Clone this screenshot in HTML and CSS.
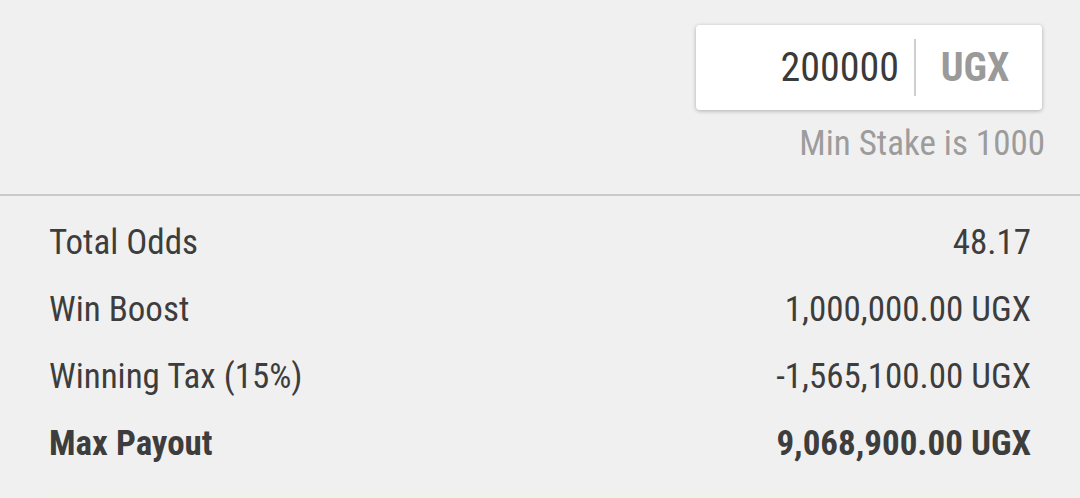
FILE: index.html
```html
<!DOCTYPE html>
<html lang="en">
<head>
    <meta charset="UTF-8">
    <meta name="viewport" content="width=device-width, initial-scale=1.0">
    <title>Betslip</title>
    <link rel="stylesheet" href="styles.css">
</head>
<body>
    <div class="stake">
        <div class="stake-box">
            <input type="text" id="amount" class="stake-input" value="200000">
            <span class="stake-currency">UGX</span>
        </div>
        <div class="stake-hint">Min Stake is 1000</div>
    </div>

    <div class="summary">
        <div class="row">
            <span>Total Odds</span>
            <span>48.17</span>
        </div>
        <div class="row">
            <span>Win Boost</span>
            <span>1,000,000.00 UGX</span>
        </div>
        <div class="row">
            <span>Winning Tax (15%)</span>
            <span>-1,565,100.00 UGX</span>
        </div>
        <div class="row row-total">
            <span>Max Payout</span>
            <span>9,068,900.00 UGX</span>
        </div>
    </div>
    <div class="next-card"></div>
</body>
</html>
```

FILE: styles.css
```css
body {
    margin: 0;
    background-color: #f0f0f0;
    color: #3d3d3d;
    font-family: "Roboto Condensed", Roboto, "Liberation Sans", sans-serif;
}
.stake {
    padding: 25px 35px 30px 0;
    border-bottom: 2px solid #c9c9c9;
    display: flex;
    flex-direction: column;
    align-items: flex-end;
}
.stake-box {
    display: flex;
    align-items: center;
    width: 346px;
    height: 85px;
    margin-right: 3px;
    background-color: #fff;
    border-radius: 4px;
    box-shadow: 0 1px 4px rgba(0, 0, 0, 0.28);
}
.stake-input {
    width: 203px;
    padding: 0 15px 0 0;
    border: none;
    outline: none;
    background: transparent;
    font-family: inherit;
    font-size: 40px;
    color: #3a3a3a;
    text-align: right;
}
.stake-currency {
    flex: 1;
    height: 57px;
    line-height: 57px;
    border-left: 2px solid #cfcfcf;
    text-align: center;
    font-size: 40px;
    font-weight: bold;
    color: #9a9a9a;
    padding-right: 8px;
}
.stake-hint {
    margin-top: 13px;
    font-size: 35px;
    color: #9c9c9c;
}
.summary {
    padding: 13px 49px 0 49px;
}
.row {
    display: flex;
    justify-content: space-between;
    font-size: 35px;
    line-height: 67px;
}
.row-total {
    font-weight: bold;
}
.next-card {
    margin: 17px 40px 0 40px;
    height: 6px;
    background-color: #edf2eb;
}
```
